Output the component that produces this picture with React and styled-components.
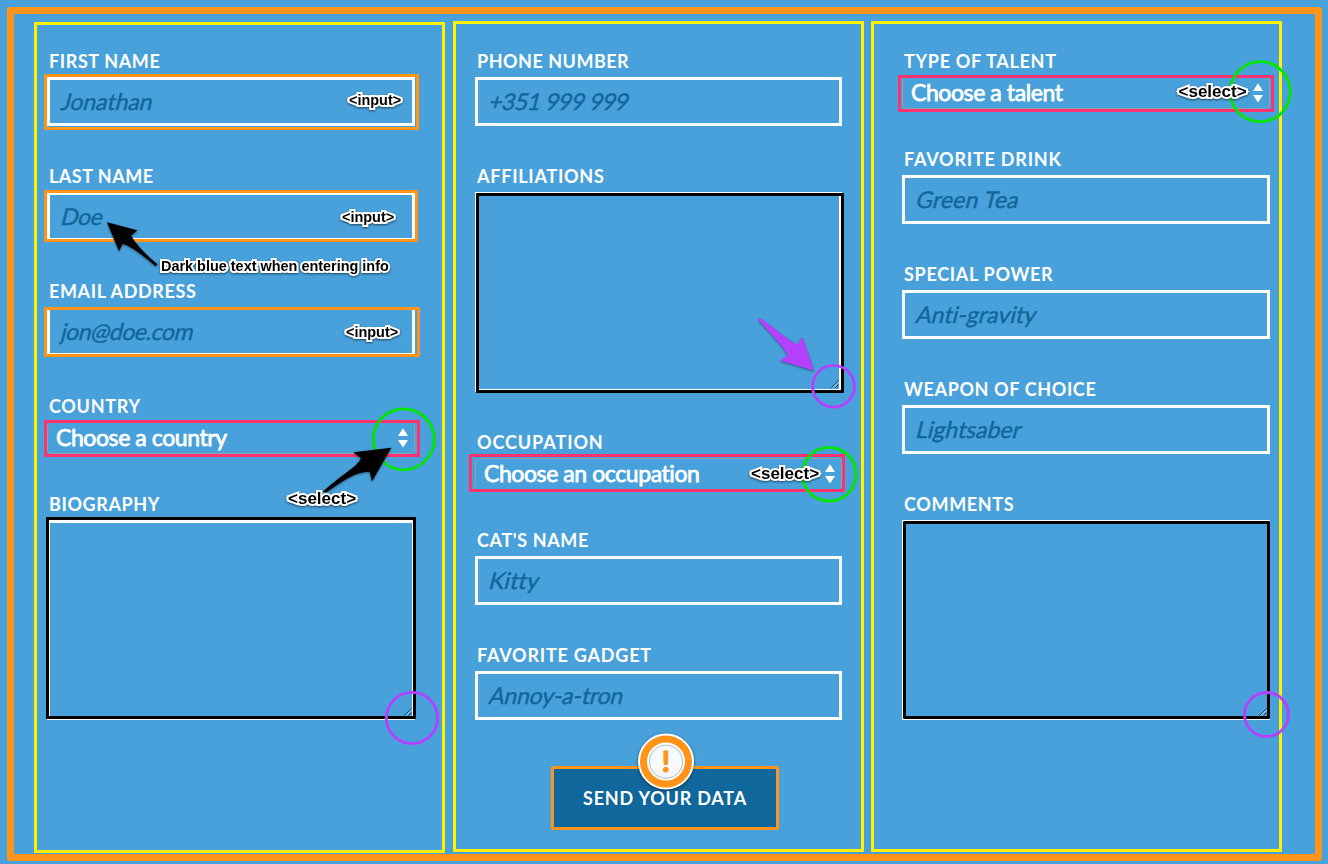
import React from "react";
import styled, { createGlobalStyle } from "styled-components";

const blue = "#48a1da";
const navy = "#10679b";
const orange = "#ff9419";
const yellow = "#fff200";
const pink = "#ff3270";
const green = "#00e600";
const purple = "#b640ff";

const Global = createGlobalStyle`
  *, *::before, *::after { box-sizing: border-box; }
  body { margin: 0; background: ${blue}; }
`;

const Page = styled.div`
  position: relative;
  width: 1328px;
  height: 864px;
  padding: 7px 6px 3px 7px;
  overflow: hidden;
  background: ${blue};
  font-family: Lato, "Liberation Sans", sans-serif;
`;

const Form = styled.form`
  display: flex;
  width: 100%;
  height: 100%;
  padding: 7px 0 0 20px;
  border: 7px solid ${orange};
  border-radius: 3px;
`;

const Column = styled.section`
  flex: none;
  width: 411px;
  height: 831px;
  margin-top: ${(p) => p.$drop || 0}px;
  margin-right: ${(p) => p.$gap || 0}px;
  padding: ${(p) => 25 - (p.$drop || 0)}px 0 0 ${(p) => p.$inset}px;
  border: 3px solid ${yellow};
  border-radius: 1px;
`;

const FieldBox = styled.div`
  width: ${(p) => p.$width}px;
  margin-bottom: 38px;
`;

const Label = styled.label`
  display: block;
  height: 24px;
  margin-bottom: 4px;
  padding-left: 2px;
  color: #fff;
  font-size: 18px;
  font-weight: 700;
  line-height: 24px;
  letter-spacing: ${(p) => p.$tracking}px;
  text-transform: uppercase;
  white-space: nowrap;
`;

const Control = styled.div`
  position: relative;
  display: flex;
`;

const InputFrame = styled.div`
  width: 100%;
  height: 49px;
  border: 3px solid #fff;
`;

const Input = styled.input`
  display: block;
  width: 100%;
  height: 41px;
  padding: 0 10px;
  border: 0;
  outline: 0;
  background: transparent;
  color: ${navy};
  font: 400 23px/30px Lato, sans-serif;
  letter-spacing: ${(p) => p.$tracking}px;
  -webkit-text-stroke: 0.4px ${navy};
  transform: skewX(-14deg);
  transform-origin: 0 29px;
  &::placeholder { color: ${navy}; opacity: 1; }
`;

const TextArea = styled.textarea`
  width: 100%;
  height: 200px;
  border: 3px solid #fff;
  border-radius: 0;
  outline: 0;
  resize: none;
  background: transparent;
  color: ${navy};
  font: italic 400 23px/30px Lato, sans-serif;
`;

const Select = styled.select`
  appearance: none;
  width: 100%;
  height: 32px;
  padding: 0 8px 2px;
  border: 1px solid #8fa3ae;
  border-radius: 5px;
  outline: 0;
  background: transparent;
  color: #fff;
  font: 400 23px/28px Lato, sans-serif;
  letter-spacing: -0.42px;
  -webkit-text-stroke: 0.75px #fff;
`;

const Stepper = styled.svg`
  position: absolute;
  right: 6px;
  top: 6px;
  z-index: 3;
`;

const Grip = styled.svg`
  position: absolute;
  right: 3px;
  bottom: 4px;
`;

const Highlight = styled.span`
  position: absolute;
  top: ${(p) => -p.$box[0]}px;
  right: ${(p) => -p.$box[1]}px;
  bottom: ${(p) => -p.$box[2]}px;
  left: ${(p) => -p.$box[3]}px;
  border: 3px solid ${(p) => p.$color};
  border-radius: 1px;
  pointer-events: none;
`;

const Submit = styled.button`
  position: relative;
  display: block;
  width: 228px;
  height: 64px;
  margin: 46px 0 0 76px;
  padding: 0;
  border: 3px solid ${orange};
  border-radius: 2px;
  background: ${navy};
  color: #fff;
  font: 700 18px/24px Lato, sans-serif;
  letter-spacing: 0.8px;
  text-transform: uppercase;
`;

const Marks = styled.svg`
  position: absolute;
  inset: 0;
  pointer-events: none;
`;

const Note = styled.span`
  position: absolute;
  left: ${(p) => p.$x}px;
  top: ${(p) => p.$y}px;
  z-index: 2;
  color: #000;
  font: 700 ${(p) => p.$size || 14.45}px/20px "Liberation Sans", sans-serif;
  white-space: nowrap;
  -webkit-text-stroke: 4px #fff;
  paint-order: stroke fill;
  stroke-linejoin: round;
  filter: drop-shadow(0 1px 1px rgba(0, 0, 0, 0.55));
`;

const Alert = styled.svg`
  position: absolute;
  left: 634px;
  top: 730px;
  z-index: 3;
`;

const Arrows = () => (
  <Stepper width="12" height="20" viewBox="0 0 12 20" fill="#fff">
    <path d="M6 .2 11 8H1zM6 19.6 11 12H1z" />
  </Stepper>
);

const GripIcon = () => (
  <Grip width="8" height="8" viewBox="0 0 8 8" fill="none">
    <path d="M.5 7.5 7.5 .5M4.5 7.5 7.5 4.5" stroke="#173c55" />
    <path d="M2 7.5 7.5 2" stroke="#b9dcf2" />
  </Grip>
);

const Field = ({ label, tracking, kind, text, textTracking = -0.45, width = 368, color, box }) => (
  <FieldBox $width={width}>
    <Label $tracking={tracking}>{label}</Label>
    <Control>
      {kind === "select" && (
        <>
          <Select aria-label={label}>
            <option>{text}</option>
          </Select>
          <Arrows />
        </>
      )}
      {kind === "area" && (
        <>
          <TextArea aria-label={label} />
          <GripIcon />
        </>
      )}
      {!kind && (
        <InputFrame>
          <Input aria-label={label} placeholder={text} $tracking={textTracking} />
        </InputFrame>
      )}
      {box && <Highlight $color={color} $box={box} />}
    </Control>
  </FieldBox>
);

const circles = [
  [403.7, 439.3, 30.5, green],
  [829.2, 474.2, 26.8, green],
  [1260.3, 91.7, 30, green],
  [412, 718, 25.6, purple],
  [833.5, 386.2, 20.9, purple],
  [1266.5, 714.5, 22, purple],
];

const notes = [
  [349, 90, "<input>"],
  [342, 207, "<input>"],
  [346, 322, "<input>"],
  [161, 256, "Dark blue text when entering info"],
  [288, 489, "<select>", 17],
  [751, 464, "<select>", 17],
  [1178.5, 82, "<select>", 17],
];

export default function App() {
  return (
    <>
      <Global />
      <Page>
        <Form>
          <Column $drop={1} $gap={8} $inset={10}>
            <Field label="First name" tracking={0.6} text="Jonathan" textTracking={-0.05} color={orange} box={[3, 4, 4, 3]} />
            <Field label="Last name" tracking={0.5} text="Doe" color={orange} box={[2, 3, 1, 3]} />
            <Field label="Email address" tracking={0.63} text="jon@doe.com" color={orange} box={[0, 5, 1, 3]} />
            <Field label="Country" tracking={0.7} kind="select" text="Choose a country" color={pink} box={[2, 5, 3, 3]} />
            <Field label="Biography" tracking={0.6} kind="area" color="#000" box={[3, 1, -1, 1]} />
          </Column>
          <Column $gap={7} $inset={19}>
            <Field label="Phone number" tracking={0.5} text="+351 999 999" textTracking={-0.5} width={367} />
            <Field label="Affiliations" tracking={0.75} kind="area" width={367} color="#000" box={[-1, 2, 1, -1]} />
            <Field label="Occupation" tracking={0.92} kind="select" text="Choose an occupation" width={367} color={pink} box={[4, 3, 2, 6]} />
            <Field label="Cat's name" tracking={0.62} text="Kitty" textTracking={0.1} width={367} />
            <Field label="Favorite gadget" tracking={0.8} text="Annoy-a-tron" textTracking={-0.2} width={367} />
            <Submit type="button">Send your data</Submit>
          </Column>
          <Column $inset={28}>
            <Field label="Type of talent" tracking={0.7} kind="select" text="Choose a talent" color={pink} box={[2, 4, 3, 4]} />
            <Field label="Favorite drink" tracking={0.8} text="Green Tea" textTracking={0.15} />
            <Field label="Special power" tracking={0.7} text="Anti-gravity" textTracking={0.05} />
            <Field label="Weapon of choice" tracking={0.63} text="Lightsaber" textTracking={-0.02} />
            <Field label="Comments" tracking={0.65} kind="area" color="#000" box={[-1, 0, -1, -1]} />
          </Column>
        </Form>

        <Marks width="1328" height="864" viewBox="0 0 1328 864">
          {circles.map(([x, y, r, c]) => (
            <circle key={x} cx={x} cy={y} r={r} fill="none" stroke={c} strokeWidth="2.8" />
          ))}
          <g style={{ filter: "drop-shadow(0 1.5px 1px rgba(0,0,0,.45))" }}>
            <path d="M107 222.3 137.3 230.3 131 235.7Q139 249 157.5 264.3L155.5 266.3Q133 246.5 122.7 243.7L119 251.3Z" />
            <path d="M391.3 447.7 372 481.3 369.7 471.7C355 471.5 341 482 326 492.5L323 491.5C345 472 357 467 361 458.3L353.3 452.3Z" />
            <path fill={purple} d="M814 370.7 802.3 336.7 797.5 344.5C790 341.5 774 328 760.7 318Q758 318 759 320.7C775 338 784 348 788 355.3L780 360.5Z" />
          </g>
        </Marks>

        {notes.map(([x, y, t, s]) => (
          <Note key={x} $x={x} $y={y} $size={s}>
            {t}
          </Note>
        ))}

        <Alert width="64" height="64" viewBox="0 0 64 64">
          <g style={{ filter: "drop-shadow(0 1px 1.5px rgba(0,0,0,.5))" }}>
            <circle cx="32" cy="31.5" r="22.5" fill="none" stroke="#fff" strokeWidth="11" />
          </g>
          <circle cx="32" cy="31.5" r="18" fill="#fff" fillOpacity=".94" />
          <circle cx="32" cy="31.5" r="22.5" fill="none" stroke={orange} strokeWidth="7" />
          <circle cx="32" cy="31.7" r="16.6" fill="none" stroke="#b4bbc0" strokeWidth="1" />
          <text x="32" y="42" textAnchor="middle" fill={orange} stroke={orange} strokeWidth="1" fontFamily="Lato, sans-serif" fontWeight="900" fontSize="29">
            !
          </text>
        </Alert>
      </Page>
    </>
  );
}
